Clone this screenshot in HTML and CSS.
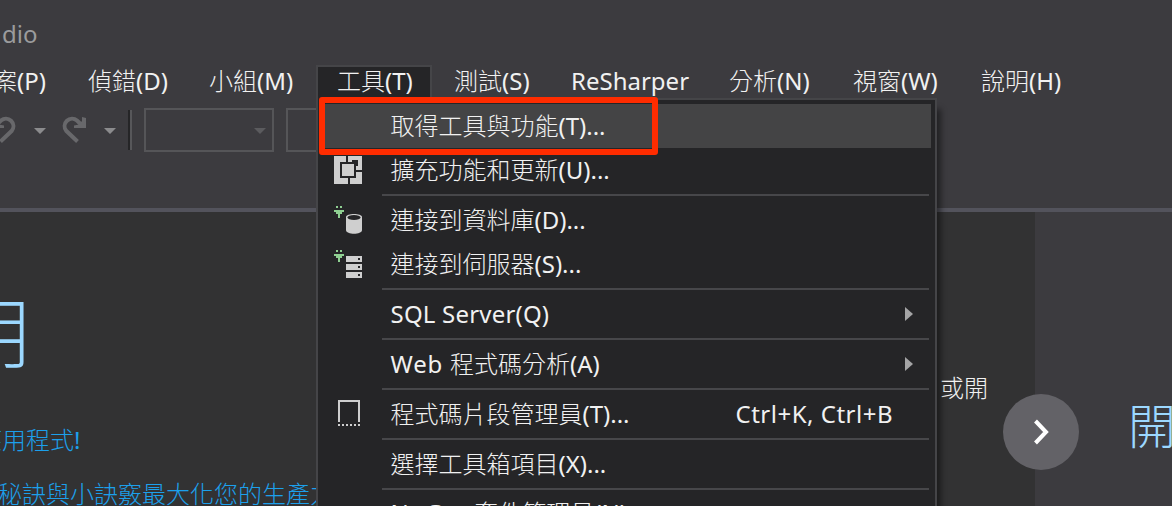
FILE: index.html
```html
<!DOCTYPE html>
<html lang="zh-Hant">
<head>
<meta charset="utf-8">
<title>Visual Studio</title>
<link rel="stylesheet" href="styles.css">
</head>
<body>
<div class="window">
  <header class="titlebar"><span class="studio">dio</span></header>
  <nav class="menubar">
    <span class="first">案<b>(P)</b></span><span>偵錯<b>(D)</b></span><span>小組<b>(M)</b></span><span class="open">工具<b>(T)</b></span><span>測試<b>(S)</b></span><span><b class="rs">ReSharper</b></span><span>分析<b>(N)</b></span><span>視窗<b>(W)</b></span><span>說明<b>(H)</b></span>
  </nav>
  <div class="toolbar">
    <svg class="history" width="132" height="44" viewBox="0 0 132 44">
      <g fill="none" stroke="#68686b" stroke-width="4"><path d="M.5 33.500L11.800 22.800A7.500 7.500 0 0 0 1 12.500L-3 16.500"/><path d="M77.500 33.500L66.200 22.800A7.500 7.500 0 0 1 77 12.500L81 16.500"/></g>
      <path fill="#68686b" d="M86 10V20H74V17.500L79 16.500L82 13V9ZM-8 10V20H4V17.500L-1 16.500L-4 13V9Z"/>
      <path fill="#8b8b8d" d="M34 20H46L40 26ZM104 20H116L110 26Z"/>
      <path fill="#252527" d="M128 2H130V42H128Z"/><path fill="#57575a" d="M130 2H132V42H130Z"/>
    </svg>
    <div class="combo"><svg width="12" height="6"><path fill="#5b5b5e" d="M0 0H12L6 6Z"/></svg></div>
    <div class="combo"></div>
  </div>
  <main class="start">
    <section class="page">
      <h1>用</h1>
      <p class="link link-app">應用程式<b>!</b></p>
      <p class="link link-tips">秘訣與小訣竅最大化您的生產力</p>
      <p class="note">或開</p>
    </section>
    <aside class="news"><h2>開</h2></aside>
  </main>

  <div class="tools">
    <div class="row active"><i></i><span>取得工具與功能<b>(T)...</b></span></div>
    <div class="row"><i><svg width="32" height="36" viewBox="0 0 32 36">
      <path fill="#cfcfcf" d="M0 4H28V32H0Z"/><path fill="#252527" d="M6 10H12V4H14V10H18V8H24V14H22V18H28V20H22V26H16V32H14V26H6Z"/><path fill="#cfcfcf" d="M8 12H20V24H8Z"/></svg></i><span>擴充功能和更新<b>(U)...</b></span></div>
    <hr>
    <div class="row"><i><svg width="32" height="36" viewBox="0 0 32 36">
      <path fill="#8fd092" d="M2 4H4V6H2ZM6 4H8V6H6ZM0 8H10V10H8V12H6V16H4V12H2V10H0Z"/>
      <path fill="#cfcfcf" d="M12 15C12 11 28 11 28 15V28C28 33 12 33 12 28Z"/><ellipse cx="20" cy="15.500" rx="6.500" ry="2.500" fill="#252527"/></svg></i><span>連接到資料庫<b>(D)...</b></span></div>
    <div class="row"><i><svg width="32" height="36" viewBox="0 0 32 36">
      <path fill="#8fd092" d="M2 4H4V6H2ZM6 4H8V6H6ZM0 8H10V10H8V12H6V16H4V12H2V10H0Z"/>
      <path fill="#cfcfcf" d="M12 10H28V16H12ZM12 18H28V24H12ZM12 26H28V32H12Z"/><path fill="#252527" d="M24 12H26V14H24ZM24 20H26V22H24ZM24 28H26V30H24Z"/></svg></i><span>連接到伺服器<b>(S)...</b></span></div>
    <hr>
    <div class="row"><i></i><span><b class="sql">SQL Server(Q)</b></span><svg class="more" width="8" height="14"><path fill="#a4a4a5" d="M0 0L8 7L0 14Z"/></svg></div>
    <hr>
    <div class="row"><i></i><span><b class="web">Web </b>程式碼分析<b>(A)</b></span><svg class="more" width="8" height="14"><path fill="#a4a4a5" d="M0 0L8 7L0 14Z"/></svg></div>
    <hr>
    <div class="row"><i><svg width="32" height="36" viewBox="0 0 32 36">
      <path fill="#cfcfcf" d="M4 4H26V26H24V6H6V26H4Z"/><path stroke="#cfcfcf" stroke-width="2" stroke-dasharray="2" d="M4 29H26"/></svg></i><span>程式碼片段管理員<b>(T)...</b></span><b class="keys">Ctrl+K, Ctrl+B</b></div>
    <hr>
    <div class="row"><i></i><span>選擇工具箱項目<b>(X)...</b></span></div>
    <hr>
    <div class="row last"><i></i><span><b class="nuget">NuGet </b>套件管理員<b>(N)</b></span></div>
  </div>
  <div class="callout"></div>
  <div class="next"><svg width="76" height="76"><path fill="none" stroke="#fff" stroke-width="4" d="M32.500 27L43 38L32.500 49"/></svg></div>
</div>
</body>
</html>
```
FILE: styles.css
```css
* { box-sizing: border-box; }
body { margin: 0; }
.window {
  position: relative;
  display: flex;
  flex-direction: column;
  width: 1172px;
  height: 506px;
  overflow: hidden;
  background: #3c3b3f;
  color: #f1f1f1;
  font: 300 24px/34px "Noto Sans CJK TC", sans-serif;
  white-space: nowrap;
}
b { font-family: "Noto Sans", sans-serif; font-weight: 400; font-size: 24px; letter-spacing: 0; white-space: pre; }
.titlebar { height: 62px; padding-top: 17px; color: #9b9b9d; }
.studio { display: block; margin-left: 2px; font-family: "Noto Sans", sans-serif; font-weight: 400; }
.menubar { display: grid; grid-template-columns: 88px 121px 107px 138px 117px 158px 124px 128px 191px; height: 36px; }
.menubar span { padding-top: 1px; }
.menubar .first { margin-left: -7px; }
.menubar .open { width: 116px; height: 33px; margin-top: 3px; padding: 0 0 0 19px; background: #252527; border: 2px solid #454548; border-bottom: 0; line-height: 26px; }
.toolbar { display: flex; height: 110px; padding-top: 10px; }
.history { flex: none; margin-right: 12px; }
.combo { flex: none; width: 130px; height: 44px; margin-right: 12px; border: 2px solid #555558; padding: 18px 0 0 108px; }
.combo svg { display: block; }
.start { display: flex; height: 298px; border-top: 4px solid #53535c; }
.page { width: 1035px; height: 294px; background: #323233; display: grid; grid-template: 210px 54px 1fr / 330px 1fr; }
h1, h2, p { margin: 0; font-weight: 300; }
h1 { font-size: 78px; line-height: 90px; color: #9cd8ff; margin: 71px 0 0 -45px; }
.link { grid-column: 1; color: #1ca0ec; }
.link-app { margin-left: -22px; }
.link-tips { margin-left: -2px; }
.note { grid-column: 2; grid-row: 1; padding: 158px 0 0 610px; }
.news { width: 137px; padding: 181px 0 0 93px; }
.news h2 { font-size: 48px; line-height: 60px; color: #9cd8ff; }
.tools { position: absolute; left: 316px; top: 98px; width: 621px; height: 430px; padding: 4px; background: #252527; border: 2px solid #454548; box-shadow: 7px 8px 6px -3px rgba(0,0,0,.45); clip-path: inset(0 -20px 0 0); }
.tools::before { content: ""; position: absolute; left: 0; top: -2px; width: 112px; height: 2px; background: #252527; }
.row { display: flex; align-items: center; width: 609px; height: 44px; padding-left: 12px; }
.row > span, .row > b { padding-bottom: 1px; }
.row > span { padding-left: .5px; }
.last > span { padding-bottom: 3px; }
.active { background: #444445; }
.row i { width: 56px; height: 36px; flex: none; line-height: 0; }
.row .more { margin: 0 18px 0 auto; }
.row .keys { margin: 0 38px 0 auto; letter-spacing: .5px; }
.sql { letter-spacing: .2px; }
.web, .nuget { letter-spacing: .8px; }
.tools hr { height: 2px; margin: 2px 2px 2px 60px; border: 0; background: #47474a; }
.callout { position: absolute; left: 319px; top: 97px; width: 339px; height: 58px; border: 6px solid #ff2c00; border-radius: 3px; }
.next { position: absolute; left: 1003px; top: 394px; width: 76px; height: 76px; border-radius: 50%; background: #636267; }
```
